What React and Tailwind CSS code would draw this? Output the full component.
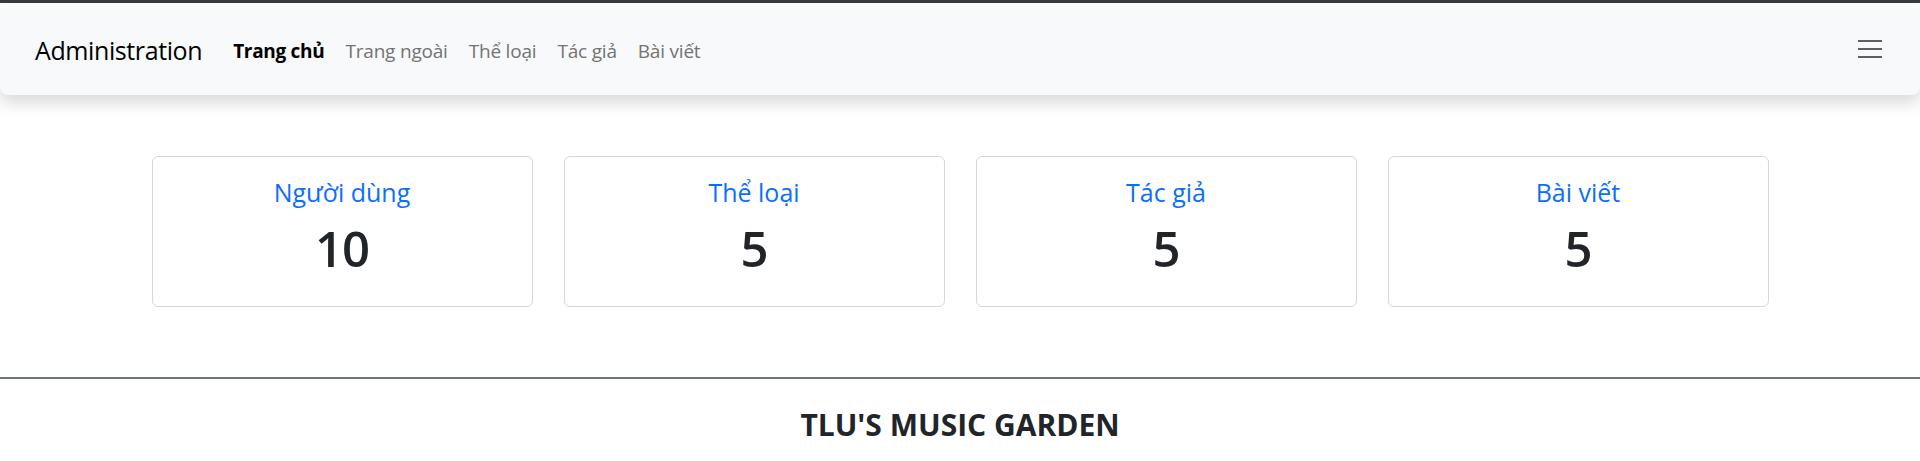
import React from "react";

const stats = [
  { title: "Người dùng", value: "10" },
  { title: "Thể loại", value: "5" },
  { title: "Tác giả", value: "5" },
  { title: "Bài viết", value: "5" },
];

const links = ["Trang ngoài", "Thể loại", "Tác giả", "Bài viết"];

export default function App() {
  return (
    <div
      className="min-h-[461px] bg-white border-t-[3px] border-[#343a40] text-[#212529]"
      style={{ fontFamily: '"Open Sans", "Noto Sans", sans-serif' }}
    >
      <nav className="h-[92px] bg-[#f8f9fa] rounded-b-[8px] shadow-[0_8px_16px_rgba(0,0,0,0.15)] flex items-center pl-[35px] pr-[38px] pt-[2px]">
        <span className="text-[25px] text-black tracking-[-0.4px] mr-[31px] leading-[32px]">Administration</span>
        <div className="flex items-center gap-[21px] text-[19px] leading-[28px] pt-[2px]">
          <span className="font-bold text-black tracking-[-0.3px]">Trang chủ</span>
          {links.map((l) => (
            <span key={l} className="text-[#737373] tracking-[-0.2px]">
              {l}
            </span>
          ))}
        </div>
        <div className="ml-auto flex flex-col gap-[6px] w-[24px] -mt-[2px]">
          <span className="h-[2px] bg-[#5d5f62]" />
          <span className="h-[2px] bg-[#5d5f62]" />
          <span className="h-[2px] bg-[#5d5f62]" />
        </div>
      </nav>

      <div className="flex justify-center gap-[31px] mt-[61px]">
        {stats.map((s) => (
          <div
            key={s.title}
            className="w-[381px] h-[151px] border border-[#d6d6d6] rounded-[6px] flex flex-col items-center"
          >
            <div className="text-[25px] text-[#0d6efd] leading-[32px] mt-[19px]">{s.title}</div>
            <div className="text-[49px] font-semibold leading-[60px] mt-[10px] tracking-[-1px] text-[#212529]">{s.value}</div>
          </div>
        ))}
      </div>

      <hr className="mt-[70px] border-0 h-[2px] bg-[#6c757d]" />

      <div className="text-center text-[30px] font-bold leading-[36px] mt-[28px] text-[#212529]">
        TLU'S MUSIC GARDEN
      </div>
    </div>
  );
}
